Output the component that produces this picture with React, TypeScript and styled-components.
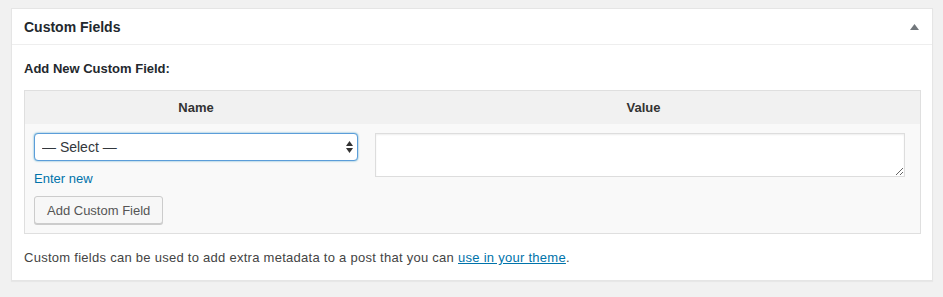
import React from "react";
import styled, { createGlobalStyle } from "styled-components";

const Global = createGlobalStyle`
  html, body { margin: 0; padding: 0; background: #f1f1f1; }
  body { font-family: "Liberation Sans", Arial, sans-serif; color: #23282d; font-size: 13px; }
  * { box-sizing: border-box; }
`;

const Page = styled.div`
  padding: 8px 10px 16px 11px;
`;

const Postbox = styled.div`
  background: #fff;
  border: 1px solid #e5e5e5;
  box-shadow: 0 1px 1px rgba(0, 0, 0, 0.04);
  width: 922px;
`;

const Header = styled.div`
  display: flex;
  align-items: center;
  justify-content: space-between;
  height: 36px;
  padding: 0 12px 0 12px;
  border-bottom: 1px solid #eee;
`;

const Title = styled.h2`
  margin: 0;
  font-size: 14px;
  font-weight: 700;
  color: #23282d;
`;

const Toggle = styled.svg`
  width: 9px;
  height: 6px;
  margin-right: 1px;
  margin-top: 1px;
`;

const Inside = styled.div`
  padding: 12px 12px 14px 12px;
`;

const Label = styled.p`
  margin: 4px 0 13px;
  font-weight: 700;
  font-size: 13px;
  line-height: 16px;
  color: #23282d;
`;

const Table = styled.div`
  display: grid;
  grid-template-columns: 342px 1fr;
  border: 1px solid #dfdfdf;
  background: #f9f9f9;
  width: 897px;
`;

const HeadCell = styled.div`
  background: #f1f1f1;
  height: 33px;
  display: flex;
  align-items: center;
  justify-content: center;
  font-weight: 700;
  font-size: 13px;
  color: #333;
`;

const LeftCell = styled.div`
  padding: 9px 0 9px 9px;
  display: flex;
  flex-direction: column;
  align-items: flex-start;
`;

const RightCell = styled.div`
  padding: 9px 15px 9px 8px;
`;

const SelectWrap = styled.div`
  position: relative;
  width: 324px;
  height: 28px;
`;

const Select = styled.select`
  appearance: none;
  -webkit-appearance: none;
  width: 100%;
  height: 28px;
  border: 1px solid #5b9dd9;
  border-radius: 4px;
  box-shadow: 0 0 2px rgba(30, 140, 190, 0.8);
  background: #fff;
  font-family: "Liberation Sans", Arial, sans-serif;
  font-size: 14px;
  color: #32373c;
  padding: 0 20px 0 7px;
  outline: none;
`;

const Arrows = styled.svg`
  position: absolute;
  right: 5px;
  top: 8px;
  width: 7px;
  height: 12px;
  pointer-events: none;
`;

const EnterNew = styled.a`
  color: #0073aa;
  text-decoration: none;
  font-size: 13px;
  margin-top: 9px;
  line-height: 17px;
`;

const Button = styled.button`
  margin-top: 9px;
  height: 28px;
  padding: 0 12px;
  border: 1px solid #ccc;
  border-radius: 3px;
  background: #f7f7f7;
  box-shadow: 0 1px 0 #ccc;
  font-family: "Liberation Sans", Arial, sans-serif;
  font-size: 13px;
  color: #555;
`;

const TextArea = styled.textarea`
  display: block;
  width: 100%;
  height: 44px;
  border: 1px solid #ddd;
  box-shadow: inset 0 1px 2px rgba(0, 0, 0, 0.07);
  background: #fff;
  resize: vertical;
  font-family: "Liberation Sans", Arial, sans-serif;
  font-size: 14px;
  margin: 0;
`;

const Note = styled.p`
  margin: 15px 0 0;
  font-size: 13px;
  line-height: 17px;
  letter-spacing: 0.27px;
  color: #444;
`;

const Link = styled.a`
  color: #0073aa;
  text-decoration: underline;
`;

export default function App() {
  return (
    <>
      <Global />
      <Page>
        <Postbox>
          <Header>
            <Title>Custom Fields</Title>
            <Toggle viewBox="0 0 9 6">
              <polygon points="4.5,0 9,6 0,6" fill="#72777c" />
            </Toggle>
          </Header>
          <Inside>
            <Label>Add New Custom Field:</Label>
            <Table>
              <HeadCell>Name</HeadCell>
              <HeadCell>Value</HeadCell>
              <LeftCell>
                <SelectWrap>
                  <Select defaultValue="sel">
                    <option value="sel">— Select —</option>
                  </Select>
                  <Arrows viewBox="0 0 7 12">
                    <polygon points="3.5,0 7,5 0,5" fill="#333" />
                    <polygon points="0,7 7,7 3.5,12" fill="#333" />
                  </Arrows>
                </SelectWrap>
                <EnterNew href="#">Enter new</EnterNew>
                <Button>Add Custom Field</Button>
              </LeftCell>
              <RightCell>
                <TextArea />
              </RightCell>
            </Table>
            <Note>
              Custom fields can be used to add extra metadata to a post that you can{" "}
              <Link href="#">use in your theme</Link>.
            </Note>
          </Inside>
        </Postbox>
      </Page>
    </>
  );
}
